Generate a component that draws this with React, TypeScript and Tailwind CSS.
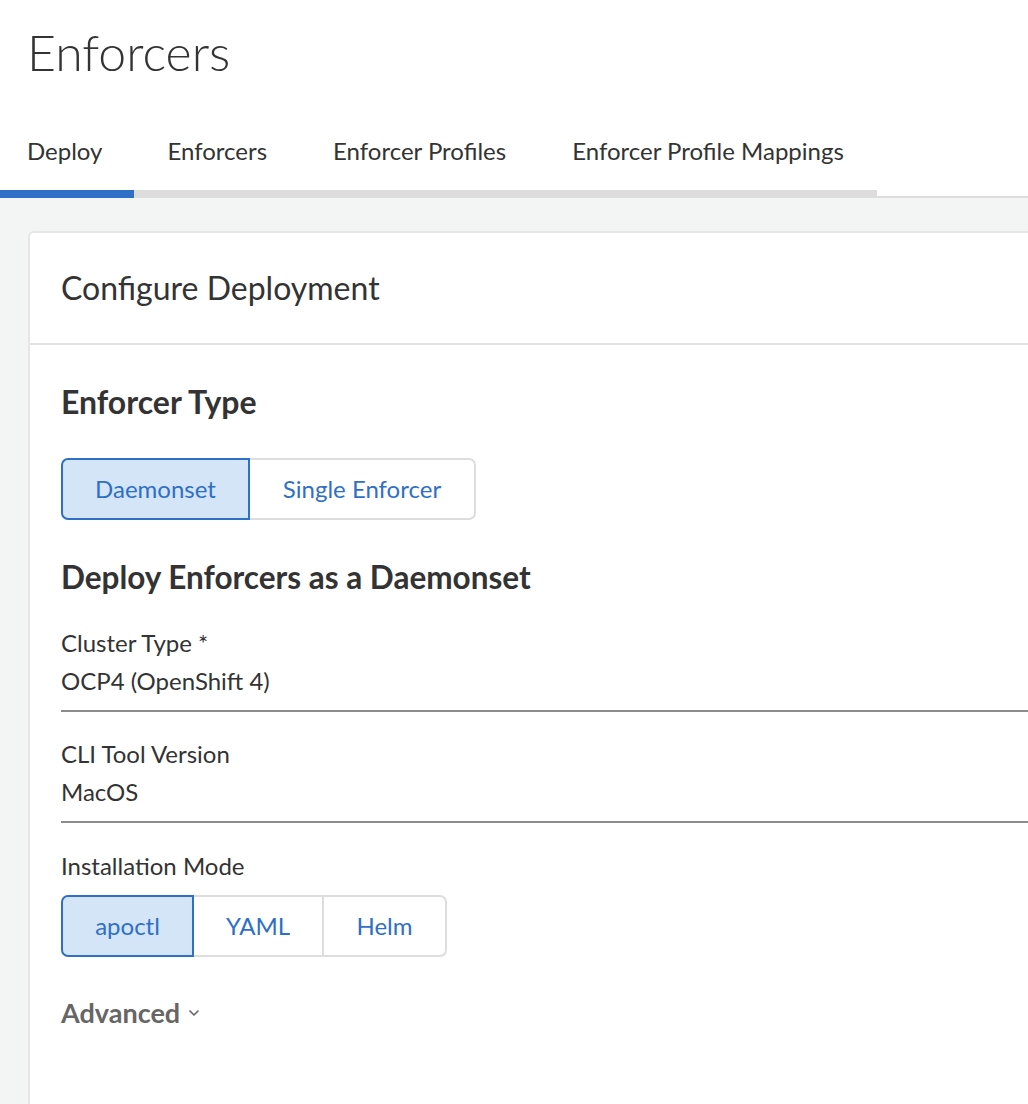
import { ChevronDown } from 'lucide-react'

type SegProps = { items: { label: string; w: string }[]; active: number }

function Segmented({ items, active }: SegProps) {
  return (
    <div className="flex h-[62px]">
      {items.map((it, i) => {
        const isActive = i === active
        const first = i === 0
        const last = i === items.length - 1
        return (
          <button
            key={it.label}
            className={[
              it.w,
              'h-full text-[24px] text-[#2f6fc6] border-2',
              isActive ? 'bg-[#d4e5f8] border-[#2f6fc6] z-10' : 'bg-white border-[#dddddd]',
              !first ? '-ml-[2px]' : '',
              first ? 'rounded-l-[7px]' : '',
              last ? 'rounded-r-[7px]' : '',
            ].join(' ')}
          >
            {it.label}
          </button>
        )
      })}
    </div>
  )
}

function SelectField({ label, value }: { label: string; value: string }) {
  return (
    <div className="border-b-2 border-[#8c8c8c] pb-[10px]">
      <div className="text-[24px] leading-[38px] text-[#333]">{label}</div>
      <div className="text-[24px] leading-[38px] text-[#333]">{value}</div>
    </div>
  )
}

export default function App() {
  const tabs = ['Deploy', 'Enforcers', 'Enforcer Profiles', 'Enforcer Profile Mappings']

  return (
    <div className="h-screen overflow-hidden bg-white font-['Lato',sans-serif] text-[#333]">
      {/* Page header */}
      <h1 className="pl-[27px] pt-[22px] text-[50px] font-light leading-[60px] text-[#333]">Enforcers</h1>

      {/* Tabs */}
      <div className="mt-[55px] border-b-2 border-[#dcdddc]">
        <div className="flex">
          {tabs.map((t, i) => (
            <div key={t} className="flex flex-col">
              <div
                className={
                  i === 0
                    ? 'pl-[27px] pr-[32px] text-[24px] leading-[28px] text-[#333]'
                    : 'px-[33px] text-[24px] leading-[28px] text-[#333]'
                }
              >
                {t}
              </div>
              <div
                className={
                  i === 0 ? 'mt-[25px] -mb-[2px] h-[8px] bg-[#2f6fc6]' : 'mt-[25px] h-[6px] bg-[#dcdddc]'
                }
              />
            </div>
          ))}
        </div>
      </div>

      {/* Content area */}
      <div className="bg-[#f3f4f4] pl-[28px] pt-[33px]">
        <div className="-mr-[20px] rounded-tl-[6px] border-2 border-[#e6e6e6] bg-white">
          <div className="flex h-[112px] items-center border-b-2 border-[#e2e2e2] pl-[31px]">
            <h2 className="text-[32px] leading-none text-[#333]">Configure Deployment</h2>
          </div>

          <div className="pl-[31px] pb-[200px]">
            <h3 className="mt-[38px] text-[32px] font-bold leading-[38px] text-[#333]">Enforcer Type</h3>
            <div className="mt-[37px]">
              <Segmented
                items={[
                  { label: 'Daemonset', w: 'w-[189px]' },
                  { label: 'Single Enforcer', w: 'w-[228px]' },
                ]}
                active={0}
              />
            </div>

            <h3 className="mt-[38px] text-[31.5px] font-bold leading-[38px] text-[#333]">
              Deploy Enforcers as a Daemonset
            </h3>

            <div className="mt-[28px] flex flex-col gap-[23px]">
              <SelectField label="Cluster Type *" value="OCP4 (OpenShift 4)" />
              <SelectField label="CLI Tool Version" value="MacOS" />
            </div>

            <div className="mt-[24px] text-[24px] leading-[38px] text-[#333]">Installation Mode</div>
            <div className="mt-[10px]">
              <Segmented
                items={[
                  { label: 'apoctl', w: 'w-[133px]' },
                  { label: 'YAML', w: 'w-[132px]' },
                  { label: 'Helm', w: 'w-[125px]' },
                ]}
                active={0}
              />
            </div>

            <button className="mt-[38px] flex items-center gap-[6px] text-[27px] font-bold leading-[36px] text-[#666]">
              Advanced
              <ChevronDown className="h-[16px] w-[16px] text-[#666]" strokeWidth={2.5} />
            </button>
          </div>
        </div>
      </div>
    </div>
  )
}
